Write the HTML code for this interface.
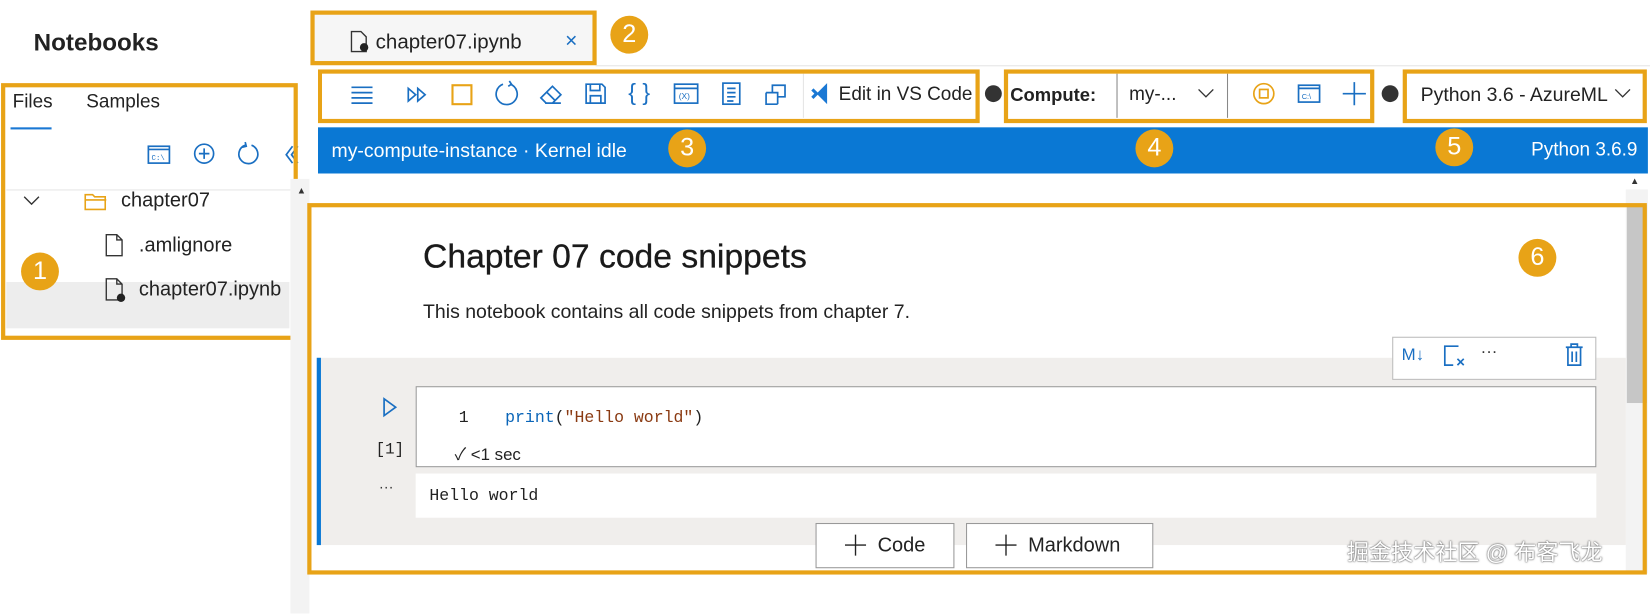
<!DOCTYPE html>
<html><head><meta charset="utf-8"><style>
*{margin:0;padding:0;box-sizing:border-box}
body{width:1650px;height:583px;background:#fff;position:relative;overflow:hidden;font-family:"Liberation Sans","Noto Sans CJK SC",sans-serif;color:#222}
#w{position:absolute;left:0;top:0;width:1568px;height:554px;transform:scale(1.05230);transform-origin:0 0}
.a{position:absolute}
.ob{position:absolute;border:4px solid #e8a317}
.c{position:absolute;width:36px;height:36px;border-radius:50%;background:#e8a317;color:#fff;font-size:24px;text-align:center;line-height:36px;z-index:5}
.t{position:absolute;white-space:nowrap}
svg{position:absolute;overflow:visible}
.ic{stroke:#1a6fc2;fill:none;stroke-width:1.6}
</style></head><body><div id="w">
<div class="t" style="left:32px;top:27px;font-size:23px;font-weight:bold;color:#222">Notebooks</div>

<!-- left panel -->
<div class="t" style="left:12px;top:86px;font-size:18px">Files</div>
<div class="t" style="left:82px;top:86px;font-size:18px">Samples</div>
<div class="a" style="left:10px;top:121px;width:39px;height:2px;background:#1a78d4"></div>
<svg style="left:140px;top:138px" width="22" height="18"><rect x="1" y="1" width="20" height="16" class="ic"/><line x1="1" y1="4" x2="21" y2="4" class="ic"/><text x="4" y="14" font-size="7" fill="#1a6fc2" font-family="Liberation Mono">C:\</text></svg>
<svg style="left:184px;top:136px" width="20" height="20"><circle cx="10" cy="10" r="9" class="ic"/><path d="M10 5v10M5 10h10" class="ic"/></svg>
<svg style="left:225px;top:135px" width="22" height="22"><path d="M8 3 A9 9 0 1 0 14 3" class="ic"/><path d="M8 0l1 4-4 1" class="ic"/></svg>
<svg style="left:270px;top:138px" width="14" height="18"><path d="M8 1L2 9l6 8M13 1L7 9l6 8" class="ic"/></svg>
<div class="a" style="left:6px;top:180px;width:270px;height:1px;background:#e6e6e6"></div>
<svg style="left:22px;top:186px" width="16" height="10"><path d="M1 1l7 7 7-7" stroke="#333" fill="none" stroke-width="1.3"/></svg>
<svg style="left:80px;top:181px" width="22" height="20"><path d="M1 4h7l2 2h10v12H1z M1 9h20" stroke="#e8a317" fill="none" stroke-width="1.5"/></svg>
<div class="t" style="left:115px;top:180px;font-size:19px">chapter07</div>
<svg style="left:100px;top:222px" width="18" height="22"><path d="M1 1h10l5 5v15H1z M11 1v5h5" stroke="#333" fill="none" stroke-width="1.3"/></svg>
<div class="t" style="left:132px;top:223px;font-size:19px">.amlignore</div>
<div class="a" style="left:6px;top:268px;width:269px;height:44px;background:#ededed"></div>
<svg style="left:100px;top:264px" width="22" height="24"><path d="M1 1h10l5 5v15H1z M11 1v5h5" stroke="#333" fill="none" stroke-width="1.3"/><circle cx="15" cy="19" r="4" fill="#222"/></svg>
<div class="t" style="left:132px;top:265px;font-size:19px">chapter07.ipynb</div>
<div class="ob" style="left:1px;top:79px;width:282px;height:244px"></div>
<div class="c" style="left:20px;top:240px">1</div>

<!-- strip -->
<div class="a" style="left:276px;top:170px;width:18px;height:413px;background:#f3f3f3"></div>
<div class="t" style="left:282px;top:176px;font-size:9px;color:#333">▲</div>

<!-- tab -->
<div class="a" style="left:296px;top:12px;width:270px;height:48px;background:#f6f6f6"></div>
<svg style="left:333px;top:29px" width="20" height="22"><path d="M1 1h9l5 5v14H1z" stroke="#333" fill="none" stroke-width="1.3"/><circle cx="13" cy="16" r="4" fill="#222"/></svg>
<div class="t" style="left:357px;top:29px;font-size:19.5px">chapter07.ipynb</div>
<div class="t" style="left:537px;top:28px;font-size:20px;color:#1a6fc2">×</div>
<div class="ob" style="left:295px;top:10px;width:272px;height:52px"></div>
<div class="c" style="left:580px;top:15px">2</div>
<div class="a" style="left:566px;top:62px;width:1084px;height:1px;background:#e5e5e5"></div>

<!-- toolbar -->
<svg style="left:333px;top:81px" width="22" height="18"><path d="M1 2h20M1 7h20M1 12h20M1 17h20" class="ic"/></svg>
<svg style="left:386px;top:83px" width="22" height="14"><path d="M2 1l7 6-7 6zM11 1l7 6-7 6z" class="ic"/></svg>
<div class="a" style="left:429px;top:80px;width:20px;height:20px;border:2px solid #e8a317"></div>
<svg style="left:470px;top:78px" width="24" height="24"><path d="M8 2 A10 10 0 1 0 15 2" class="ic" stroke-width="1.8"/><path d="M14 -1l2 3-3 2" class="ic"/></svg>
<svg style="left:512px;top:80px" width="24" height="20"><path d="M2 13L13 2l8 8-8 8H7z M8 8l8 8 M6 18h15" class="ic"/></svg>
<svg style="left:556px;top:79px" width="20" height="20"><path d="M1 1h15l3 3v15H1z M5 1v6h9V1 M5 19v-7h10v7" class="ic"/></svg>
<div class="t" style="left:597px;top:75px;font-size:22px;color:#1a6fc2">{ }</div>
<svg style="left:640px;top:79px" width="24" height="20"><rect x="1" y="1" width="22" height="18" class="ic"/><line x1="1" y1="5" x2="23" y2="5" class="ic"/><text x="5" y="15" font-size="8" fill="#1a6fc2">(X)</text></svg>
<svg style="left:686px;top:78px" width="18" height="22"><rect x="1" y="1" width="16" height="20" class="ic"/><path d="M5 6h8M5 10h8M5 14h8M5 18h6" class="ic"/></svg>
<svg style="left:727px;top:80px" width="20" height="20"><path d="M1 8v11h11M1 8h11v11M12 12h7V1H7v7" class="ic"/></svg>
<div class="a" style="left:763px;top:70px;width:1px;height:42px;background:#e5e5e5"></div>
<svg style="left:770px;top:78px" width="22" height="22"><path d="M16 1L6 11l10 10V1z" fill="#1a78d4"/><path d="M2 7l4 4-4 4" stroke="#1a78d4" stroke-width="3" fill="none"/></svg>
<div class="t" style="left:797px;top:79px;font-size:18px">Edit in VS Code</div>
<div class="ob" style="left:302px;top:66px;width:629px;height:51px"></div>
<div class="c" style="left:635px;top:123px">3</div>

<div class="a" style="left:936px;top:81px;width:16px;height:16px;border-radius:50%;background:#333"></div>
<div class="t" style="left:960px;top:80px;font-size:17.5px;font-weight:bold;color:#222">Compute:</div>
<div class="a" style="left:1061px;top:70px;width:1px;height:42px;background:#888"></div>
<div class="t" style="left:1073px;top:79px;font-size:18px">my-...</div>
<svg style="left:1138px;top:84px" width="16" height="10"><path d="M1 1l7 7 7-7" stroke="#333" fill="none" stroke-width="1.3"/></svg>
<div class="a" style="left:1166px;top:70px;width:1px;height:42px;background:#888"></div>
<svg style="left:1190px;top:78px" width="22" height="22"><circle cx="11" cy="11" r="9.5" stroke="#e8a317" fill="none" stroke-width="1.6"/><rect x="7" y="7" width="8" height="8" stroke="#e8a317" fill="none" stroke-width="1.6"/></svg>
<svg style="left:1233px;top:80px" width="22" height="18"><rect x="1" y="1" width="20" height="16" class="ic"/><line x1="1" y1="4" x2="21" y2="4" class="ic"/><text x="4" y="14" font-size="7" fill="#1a6fc2">C:\</text></svg>
<svg style="left:1276px;top:78px" width="22" height="22"><path d="M11 0v22M0 11h22" class="ic"/></svg>
<div class="ob" style="left:954px;top:66px;width:352px;height:51px"></div>
<div class="c" style="left:1079px;top:123px">4</div>

<div class="a" style="left:1313px;top:81px;width:16px;height:16px;border-radius:50%;background:#333"></div>
<div class="t" style="left:1350px;top:79px;font-size:18.5px">Python 3.6 - AzureML</div>
<svg style="left:1534px;top:84px" width="16" height="10"><path d="M1 1l7 7 7-7" stroke="#333" fill="none" stroke-width="1.3"/></svg>
<div class="ob" style="left:1333px;top:66px;width:232px;height:51px"></div>

<!-- blue bar -->
<div class="a" style="left:302px;top:121px;width:1264px;height:44px;background:#0a78d4"></div>
<div class="t" style="left:315px;top:132px;font-size:18.5px;color:#fff">my-compute-instance · Kernel idle</div>
<div class="t" style="left:1455px;top:132px;font-size:18px;color:#fff">Python 3.6.9</div>
<div class="c" style="left:1364px;top:122px">5</div>

<!-- scrollbar -->
<div class="a" style="left:1545px;top:180px;width:21px;height:365px;background:#f3f3f3"></div>
<div class="a" style="left:1546px;top:195px;width:19px;height:188px;background:#c6c6c6"></div>
<div class="t" style="left:1549px;top:167px;font-size:9px;color:#333">▲</div>

<!-- notebook content -->
<div class="t" style="left:402px;top:225px;font-size:32px;color:#1a1a1a;-webkit-text-stroke:0.3px #1a1a1a">Chapter 07 code snippets</div>
<div class="t" style="left:402px;top:285px;font-size:18.5px">This notebook contains all code snippets from chapter 7.</div>
<div class="a" style="left:301px;top:340px;width:1244px;height:178px;background:#f0eeec"></div>
<div class="a" style="left:301px;top:340px;width:4px;height:178px;background:#0a78d4"></div>
<div class="a" style="left:1323px;top:320px;width:194px;height:41px;background:#fff;border:1px solid #bbb"></div>
<div class="t" style="left:1332px;top:329px;font-size:16px;color:#1a6fc2">M↓</div>
<svg style="left:1372px;top:328px" width="22" height="22"><path d="M14 1H1v18h8" class="ic"/><path d="M13 13l6 6M19 13l-6 6" class="ic"/></svg>
<div class="t" style="left:1407px;top:326px;font-size:16px;color:#333">···</div>
<svg style="left:1487px;top:326px" width="18" height="22"><path d="M1 4h16M6 4V1h6v3M3 4v17h12V4M7 8v10M11 8v10" class="ic"/></svg>
<svg style="left:364px;top:378px" width="14" height="18"><path d="M1 1l11 8-11 8z" class="ic"/></svg>
<div class="t" style="left:357px;top:419px;font-size:15px;font-family:'Liberation Mono',monospace">[1]</div>
<div class="t" style="left:360px;top:454px;font-size:14px;color:#333">···</div>
<div class="a" style="left:395px;top:367px;width:1122px;height:77px;background:#fff;border:1px solid #999"></div>
<div class="t" style="left:436px;top:388px;font-size:15.7px;font-family:'Liberation Mono',monospace">1</div>
<div class="t" style="left:480px;top:388px;font-size:15.7px;font-family:'Liberation Mono',monospace"><span style="color:#0a65b8">print</span>(<span style="color:#8a3a12">"Hello world"</span>)</div>
<div class="t" style="left:432px;top:418px;font-size:16px">✓ &lt;1 sec</div>
<div class="a" style="left:395px;top:450px;width:1122px;height:42px;background:#fff"></div>
<div class="t" style="left:408px;top:462px;font-size:15.7px;font-family:'Liberation Mono',monospace">Hello world</div>
<div class="a" style="left:775px;top:497px;width:132px;height:43px;background:#fff;border:1px solid #999"></div>
<svg style="left:803px;top:508px" width="20" height="20"><path d="M10 0v20M0 10h20" stroke="#222" stroke-width="1.3"/></svg>
<div class="t" style="left:834px;top:508px;font-size:19px">Code</div>
<div class="a" style="left:918px;top:497px;width:178px;height:43px;background:#fff;border:1px solid #999"></div>
<svg style="left:946px;top:508px" width="20" height="20"><path d="M10 0v20M0 10h20" stroke="#222" stroke-width="1.3"/></svg>
<div class="t" style="left:977px;top:508px;font-size:19px">Markdown</div>
<div class="t" style="left:1280px;top:509px;font-size:21px;color:#fff;text-shadow:0 0 2px #666,0 0 1px #444">掘金技术社区 @ 布客飞龙</div>
<div class="ob" style="left:292px;top:193px;width:1273px;height:353px"></div>
<div class="c" style="left:1443px;top:227px">6</div>
</div></body></html>
